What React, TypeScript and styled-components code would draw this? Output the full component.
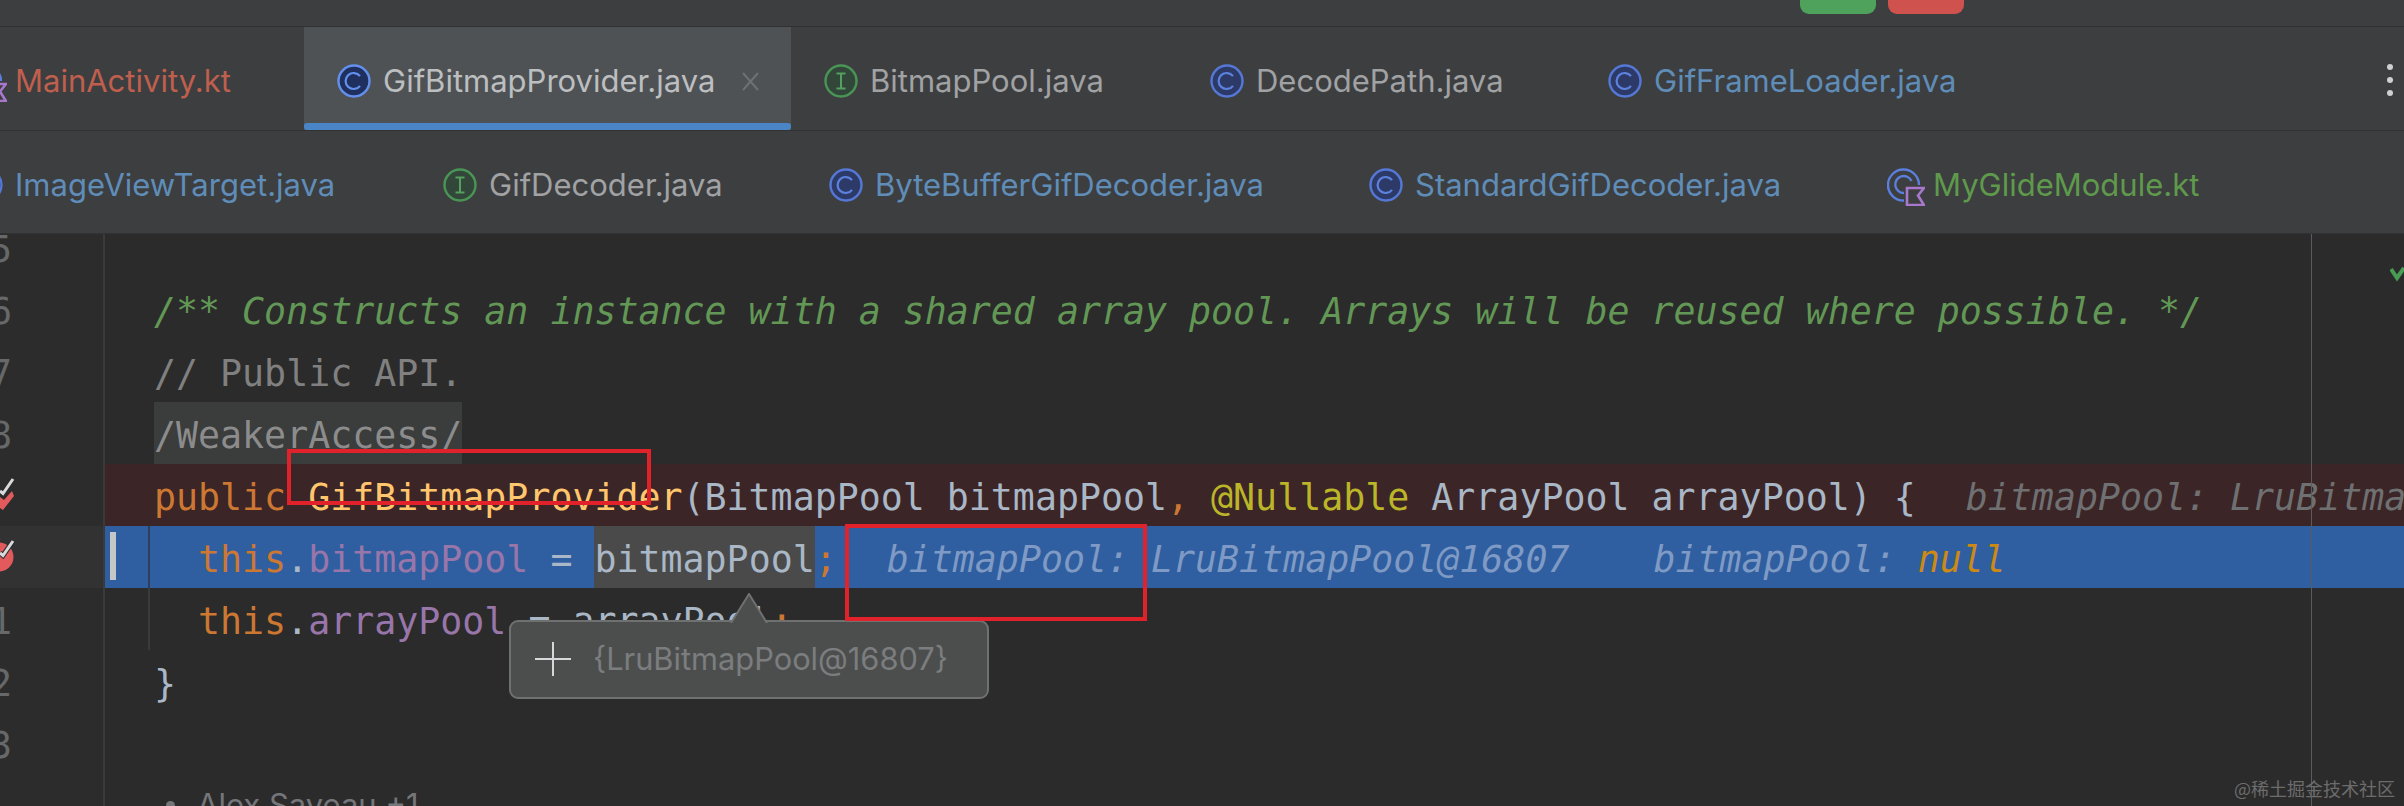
import React from "react";
import styled, { createGlobalStyle } from "styled-components";

const GlobalStyle = createGlobalStyle`
  html, body {
    margin: 0;
    padding: 0;
    background: #2b2b2b;
  }
`;

const Root = styled.div`
  position: relative;
  width: 2404px;
  height: 806px;
  overflow: hidden;
  display: flex;
  flex-direction: column;
  background: #2b2b2b;
`;

const TitleBar = styled.div`
  height: 26px;
  flex: none;
  display: flex;
  justify-content: flex-end;
  align-items: flex-start;
  gap: 12px;
  padding-right: 440px;
  background: #3c3e40;
  border-bottom: 1px solid #303132;
`;

const RunButton = styled.div<{ $color: string }>`
  width: 76px;
  height: 14px;
  border-radius: 0 0 9px 9px;
  background: ${({ $color }) => $color};
`;

const TabRow = styled.div<{ $height: number }>`
  position: relative;
  height: ${({ $height }) => $height}px;
  flex: none;
  overflow: hidden;
  background: #3d3e40;
  border-bottom: 1px solid #313233;
  box-sizing: border-box;
`;

const TabStrip = styled.div`
  height: 100%;
  margin-left: -64px;
  display: flex;
  align-items: stretch;
`;

const Tab = styled.div<{ $active?: boolean; $top: number }>`
  position: relative;
  flex: none;
  display: flex;
  align-items: center;
  gap: 12px;
  padding: ${({ $top }) => $top}px 31px 0 33px;
  background: ${({ $active }) => ($active ? "#4e5254" : "transparent")};

  ${({ $active }) =>
    $active &&
    `&::after {
      content: "";
      position: absolute;
      left: 0;
      right: 0;
      bottom: 0;
      height: 7px;
      border-radius: 3px;
      background: #4a86c7;
    }`}
`;

const TabLabel = styled.span<{ $color: string; $width: number }>`
  width: ${({ $width }) => $width}px;
  font-family: Inter, "Liberation Sans", sans-serif;
  font-size: 31px;
  line-height: 40px;
  white-space: nowrap;
  color: ${({ $color }) => $color};
`;

const CloseSlot = styled.span`
  flex: none;
  width: 19px;
  height: 19px;
  margin-left: 17px;
  color: #6e7172;
`;

const MoreDots = styled.div`
  position: absolute;
  right: 11px;
  top: 37px;
  display: flex;
  flex-direction: column;
  gap: 7px;

  span {
    width: 6px;
    height: 6px;
    border-radius: 50%;
    background: #cfd0d1;
  }
`;

const Editor = styled.div`
  position: relative;
  flex: 1;
  overflow: hidden;
  background: #2b2b2b;
`;

const Lines = styled.div`
  margin-top: -18px;
`;

const Line = styled.div<{ $tone?: "error" | "current"; $guide?: boolean; $caret?: boolean }>`
  position: relative;
  height: 62px;
  display: flex;
  font-family: "DejaVu Sans Mono", "Liberation Mono", monospace;
  font-size: 36.6px;
  line-height: 67px;
  white-space: pre;

  ${({ $guide, $tone }) =>
    $guide &&
    `&::before {
      content: "";
      position: absolute;
      left: 148px;
      top: 0;
      bottom: 0;
      width: 2px;
      background: ${$tone === "current" ? "#2b3f5c" : "#3a3b3c"};
    }`}

  ${({ $caret }) =>
    $caret &&
    `&::after {
      content: "";
      position: absolute;
      left: 110px;
      top: 6px;
      width: 6px;
      height: 48px;
      background: #c4c6c8;
    }`}
`;

const Gutter = styled.div<{ $lit?: boolean }>`
  flex: none;
  width: 103px;
  display: flex;
  color: #66686a;
  background: ${({ $lit }) => ($lit ? "#323232" : "#2c2c2c")};
  border-right: 2px solid #3a3a3a;
`;

const LineNumber = styled.div`
  width: 12px;
  overflow: hidden;
  display: flex;
  justify-content: flex-end;
`;

const Content = styled.div<{ $tone?: "error" | "current" }>`
  flex: 1;
  min-width: 0;
  overflow: hidden;
  padding-left: 49px;
  background: ${({ $tone }) =>
    $tone === "error" ? "#3b2526" : $tone === "current" ? "#2f5fa0" : "transparent"};
`;

const Token = styled.span<{ $c: string; $italic?: boolean; $bg?: string; $gap?: number }>`
  display: inline-block;
  height: 62px;
  margin-left: ${({ $gap }) => $gap || 0}px;
  color: ${({ $c }) => $c};
  font-style: ${({ $italic }) => ($italic ? "italic" : "normal")};
  background: ${({ $bg }) => $bg || "transparent"};
`;

const Author = styled.div`
  margin-left: 12px;
  display: flex;
  align-items: center;
  gap: 22px;
  height: 62px;
  font-family: Inter, "Liberation Sans", sans-serif;
  font-size: 31px;
  line-height: 62px;
  color: #74767a;

  i {
    width: 9px;
    height: 9px;
    border-radius: 50%;
    background: #74767a;
  }
`;

const MarginLine = styled.div`
  position: absolute;
  left: 2311px;
  top: 0;
  bottom: 0;
  width: 1px;
  background: #5a5b5d;
`;

const StatusCheck = styled.svg`
  position: absolute;
  right: 0;
  top: 30px;
`;

const Watermark = styled.div`
  position: absolute;
  right: 9px;
  bottom: 8px;
  font-family: "Noto Sans CJK SC", sans-serif;
  font-size: 18px;
  line-height: 20px;
  color: #6c6c6c;
`;

const Popup = styled.div`
  position: absolute;
  left: 509px;
  top: 620px;
  width: 480px;
  height: 79px;
  box-sizing: border-box;
  display: flex;
  align-items: center;
  gap: 22px;
  padding: 0 0 2px 24px;
  background: #4c4e4e;
  border: 2px solid #6f7171;
  border-radius: 9px;
`;

const PopupArrow = styled.svg`
  position: absolute;
  left: 219px;
  top: -29px;
`;

const PopupText = styled.span`
  font-family: Inter, "Liberation Sans", sans-serif;
  font-size: 30.8px;
  color: #7b7d7e;
  white-space: nowrap;
`;

const RedBox = styled.div<{ $x: number; $y: number; $w: number; $h: number }>`
  position: absolute;
  left: ${({ $x }) => $x}px;
  top: ${({ $y }) => $y}px;
  width: ${({ $w }) => $w}px;
  height: ${({ $h }) => $h}px;
  box-sizing: border-box;
  border: 4px solid #e2222a;
`;

type IconKind = "class" | "interface" | "kotlin";

function FileIcon({ kind, active }: { kind: IconKind; active?: boolean }) {
  if (kind === "interface") {
    return (
      <svg width="34" height="34" viewBox="0 0 34 34" style={{ flex: "none" }}>
        <circle cx="17" cy="17" r="15.5" fill="#33463a" stroke="#4a9556" strokeWidth="2.4" />
        <path d="M12.5 9.5h9M12.5 24.5h9M17 9.5v15" fill="none" stroke="#55a060" strokeWidth="2" />
      </svg>
    );
  }
  if (kind === "kotlin") {
    return (
      <svg width="38" height="38" viewBox="0 0 38 38" style={{ flex: "none", marginRight: -4, marginTop: 4 }}>
        <path d="M32 17A15.5 15.5 0 1 0 17 32.5" fill="none" stroke="#5a7fdc" strokeWidth="2.4" />
        <path d="M24.5 13A8.5 8.5 0 1 0 17 25" fill="none" stroke="#5a7fdc" strokeWidth="2.4" />
        <path d="M20 20h17l-6 7.5 6 9.5H20z" fill="#3d3e40" stroke="#a878cc" strokeWidth="2.6" />
      </svg>
    );
  }
  return (
    <svg width="34" height="34" viewBox="0 0 34 34" style={{ flex: "none" }}>
      <circle
        cx="17"
        cy="17"
        r="15.5"
        fill={active ? "#1f2f5e" : "#2d3a68"}
        stroke={active ? "#6390ee" : "#5578d6"}
        strokeWidth="2.4"
      />
      <path
        d="M23 12.2A8 8 0 1 0 23 21.8"
        fill="none"
        stroke={active ? "#6390ee" : "#5c82de"}
        strokeWidth="2.2"
      />
    </svg>
  );
}

const GREY = "#a0a2a4";
const BLUE = "#5f8db8";

const topTabs = [
  { name: "MainActivity.kt", kind: "kotlin" as IconKind, color: "#bf5f4e", width: 210 },
  { name: "GifBitmapProvider.java", kind: "class" as IconKind, color: "#bcbec0", width: 329, active: true },
  { name: "BitmapPool.java", kind: "interface" as IconKind, color: GREY, width: 228 },
  { name: "DecodePath.java", kind: "class" as IconKind, color: GREY, width: 240 },
  { name: "GifFrameLoader.java", kind: "class" as IconKind, color: BLUE, width: 300 },
];

const bottomTabs = [
  { name: "ImageViewTarget.java", kind: "class" as IconKind, color: BLUE, width: 316 },
  { name: "GifDecoder.java", kind: "interface" as IconKind, color: GREY, width: 228 },
  { name: "ByteBufferGifDecoder.java", kind: "class" as IconKind, color: BLUE, width: 382 },
  { name: "StandardGifDecoder.java", kind: "class" as IconKind, color: BLUE, width: 360 },
  { name: "MyGlideModule.kt", kind: "kotlin" as IconKind, color: "#5f9a4c", width: 262 },
];

const ORANGE = "#cc7832";
const TEXT = "#a9b7c6";
const PURPLE = "#9876aa";
const GREEN = "#629755";

function Breakpoint({ round }: { round?: boolean }) {
  return (
    <svg width="15" height="62" viewBox="0 0 15 62" style={{ flex: "none" }}>
      {round ? (
        <circle cx="-1" cy="31" r="14.5" fill="#e25a5c" />
      ) : (
        <path d="M0 33l4 3 8-9 2 5L3 46l-3-2z" fill="#e25a5c" />
      )}
      <path d="M0 27l3 2.5L13 15" fill="none" stroke="#2b2b2b" strokeWidth="5" />
      <path d="M0 27l3 2.5L13 15" fill="none" stroke="#d8d9da" strokeWidth="3" />
    </svg>
  );
}

export default function App() {
  return (
    <Root>
      <GlobalStyle />
      <TitleBar>
        <RunButton $color="#4fa25c" />
        <RunButton $color="#cf524e" />
      </TitleBar>

      <TabRow $height={104}>
        <TabStrip>
          {topTabs.map((tab) => (
            <Tab key={tab.name} $active={tab.active} $top={5}>
              <FileIcon kind={tab.kind} active={tab.active} />
              <TabLabel $color={tab.color} $width={tab.width}>
                {tab.name}
              </TabLabel>
              <CloseSlot>
                {tab.active && (
                  <svg width="19" height="19" viewBox="0 0 19 19">
                    <path d="M2 1l15 17M17 1L2 18" stroke="currentColor" strokeWidth="2" />
                  </svg>
                )}
              </CloseSlot>
            </Tab>
          ))}
        </TabStrip>
        <MoreDots>
          <span />
          <span />
          <span />
        </MoreDots>
      </TabRow>

      <TabRow $height={103}>
        <TabStrip>
          {bottomTabs.map((tab) => (
            <Tab key={tab.name} $top={6}>
              <FileIcon kind={tab.kind} />
              <TabLabel $color={tab.color} $width={tab.width}>
                {tab.name}
              </TabLabel>
              <CloseSlot />
            </Tab>
          ))}
        </TabStrip>
      </TabRow>

      <Editor>
        <Lines>
          <Line>
            <Gutter>
              <LineNumber>5</LineNumber>
            </Gutter>
            <Content />
          </Line>
          <Line>
            <Gutter>
              <LineNumber>6</LineNumber>
            </Gutter>
            <Content>
              <Token $c={GREEN} $italic>
                /** Constructs an instance with a shared array pool. Arrays will be reused where possible. */
              </Token>
            </Content>
          </Line>
          <Line>
            <Gutter>
              <LineNumber>7</LineNumber>
            </Gutter>
            <Content>
              <Token $c="#808080">// Public API.</Token>
            </Content>
          </Line>
          <Line>
            <Gutter>
              <LineNumber>8</LineNumber>
            </Gutter>
            <Content>
              <Token $c="#8c8c8c" $bg="#3b3c3c">
                /WeakerAccess/
              </Token>
            </Content>
          </Line>
          <Line>
            <Gutter>
              <Breakpoint />
            </Gutter>
            <Content $tone="error">
              <Token $c={ORANGE}>public </Token>
              <Token $c="#ffc66d">GifBitmapProvider</Token>
              <Token $c={TEXT}>(BitmapPool bitmapPool</Token>
              <Token $c={ORANGE}>, </Token>
              <Token $c="#bbb529">@Nullable </Token>
              <Token $c={TEXT}>ArrayPool arrayPool) {"{"}</Token>
              <Token $c="#6f7072" $italic $gap={50}>
                bitmapPool: LruBitmapPool@16807
              </Token>
            </Content>
          </Line>
          <Line $guide $caret $tone="current">
            <Gutter $lit>
              <Breakpoint round />
            </Gutter>
            <Content $tone="current">
              <Token $c={ORANGE}>{"  this"}</Token>
              <Token $c={TEXT}>.</Token>
              <Token $c={PURPLE}>bitmapPool</Token>
              <Token $c={TEXT}>{" = "}</Token>
              <Token $c={TEXT} $bg="#4a4a4a">
                bitmapPool
              </Token>
              <Token $c={ORANGE}>;</Token>
              <Token $c="#7f9ac4" $italic $gap={50}>
                bitmapPool: LruBitmapPool@16807
              </Token>
              <Token $c="#7f9ac4" $italic $gap={84}>
                {"bitmapPool: "}
              </Token>
              <Token $c="#cc8a14" $italic>
                null
              </Token>
            </Content>
          </Line>
          <Line $guide>
            <Gutter>
              <LineNumber>1</LineNumber>
            </Gutter>
            <Content>
              <Token $c={ORANGE}>{"  this"}</Token>
              <Token $c={TEXT}>.</Token>
              <Token $c={PURPLE}>arrayPool</Token>
              <Token $c={TEXT}>{" = arrayPool"}</Token>
              <Token $c={ORANGE}>;</Token>
            </Content>
          </Line>
          <Line>
            <Gutter>
              <LineNumber>2</LineNumber>
            </Gutter>
            <Content>
              <Token $c={TEXT}>{"}"}</Token>
            </Content>
          </Line>
          <Line>
            <Gutter>
              <LineNumber>3</LineNumber>
            </Gutter>
            <Content />
          </Line>
          <Line>
            <Gutter />
            <Content>
              <Author>
                <i />
                Alex Saveau +1
              </Author>
            </Content>
          </Line>
        </Lines>
        <MarginLine />
        <StatusCheck width="14" height="18" viewBox="0 0 14 18">
          <path d="M1 5l6 9 7-10" fill="none" stroke="#499c54" strokeWidth="4" />
        </StatusCheck>
        <Watermark>@稀土掘金技术社区</Watermark>
      </Editor>

      <Popup>
        <PopupArrow width="38" height="30" viewBox="0 0 38 30">
          <path d="M1 30L19 1l18 29" fill="#4c4e4e" stroke="#6f7171" strokeWidth="2" />
        </PopupArrow>
        <svg width="36" height="34" viewBox="0 0 36 34" style={{ flex: "none" }}>
          <path d="M0 17h36M18 0v34" stroke="#d6d7d8" strokeWidth="2" />
        </svg>
        <PopupText>{"{LruBitmapPool@16807}"}</PopupText>
      </Popup>

      <RedBox $x={287} $y={449} $w={364} $h={56} />
      <RedBox $x={845} $y={524} $w={302} $h={97} />
    </Root>
  );
}
